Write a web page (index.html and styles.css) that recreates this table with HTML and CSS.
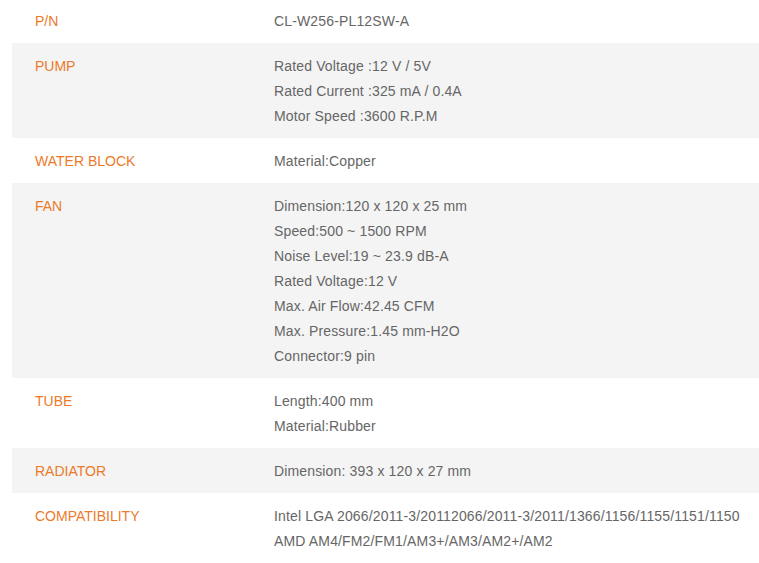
FILE: index.html
```html
<!DOCTYPE html>
<html>
<head>
<meta charset="utf-8">
<link rel="stylesheet" href="styles.css">
</head>
<body>
<div class="specs">
  <div class="row">
    <div class="label">P/N</div>
    <div class="value"><div>CL-W256-PL12SW-A</div></div>
  </div>
  <div class="row alt">
    <div class="label">PUMP</div>
    <div class="value"><div>Rated Voltage :12 V / 5V</div><div>Rated Current :325 mA / 0.4A</div><div>Motor Speed :3600 R.P.M</div></div>
  </div>
  <div class="row">
    <div class="label">WATER BLOCK</div>
    <div class="value"><div>Material:Copper</div></div>
  </div>
  <div class="row alt">
    <div class="label">FAN</div>
    <div class="value"><div>Dimension:120 x 120 x 25 mm</div><div>Speed:500 ~ 1500 RPM</div><div>Noise Level:19 ~ 23.9 dB-A</div><div>Rated Voltage:12 V</div><div>Max. Air Flow:42.45 CFM</div><div>Max. Pressure:1.45 mm-H2O</div><div>Connector:9 pin</div></div>
  </div>
  <div class="row">
    <div class="label">TUBE</div>
    <div class="value"><div>Length:400 mm</div><div>Material:Rubber</div></div>
  </div>
  <div class="row alt">
    <div class="label">RADIATOR</div>
    <div class="value"><div>Dimension: 393 x 120 x 27 mm</div></div>
  </div>
  <div class="row">
    <div class="label">COMPATIBILITY</div>
    <div class="value"><div>Intel LGA 2066/2011-3/20112066/2011-3/2011/1366/1156/1155/1151/1150</div><div>AMD AM4/FM2/FM1/AM3+/AM3/AM2+/AM2</div></div>
  </div>
</div>
</body>
</html>
```
FILE: styles.css
```css
html, body {
  margin: 0;
  padding: 0;
  background: #ffffff;
  overflow: hidden;
}
body {
  font-family: "Liberation Sans", Arial, sans-serif;
  font-size: 14px;
  line-height: 25px;
}
.specs {
  margin: -2px 0 0 12px;
}
.row {
  display: grid;
  grid-template-columns: 239px 1fr;
  padding: 11px 0 9px 23px;
}
.row.alt {
  background: #f4f4f4;
}
.label {
  color: #ec7a2a;
}
.value {
  color: #666666;
  white-space: nowrap;
  letter-spacing: 0.15px;
}
```
